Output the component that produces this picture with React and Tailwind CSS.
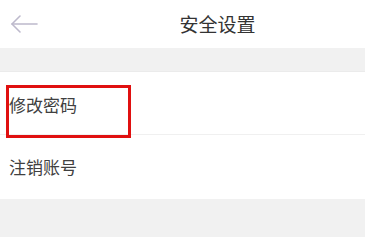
const font = { fontFamily: '"Noto Sans CJK SC", "Noto Sans", sans-serif' };

const App = () => {
  return (
    <div className="w-[365px] h-[237px] bg-[#f1f1f1] flex flex-col" style={font}>
      <div className="h-[48px] bg-white flex items-center">
        <div className="w-[70px] pl-[9px] flex items-center">
          <svg width="30" height="20" viewBox="0 0 30 20" fill="none" stroke="#bdb9cc" strokeWidth="1.6" strokeLinecap="round" strokeLinejoin="round">
            <path d="M28 10H3" />
            <path d="M11 2L3 10l8 8" />
          </svg>
        </div>
        <div className="flex-1 text-center text-[19px] text-[#333333]">安全设置</div>
      </div>
      <div className="h-[23px]" />
      <div className="bg-white border-t border-[#ebebeb]">
        <div className="h-[63px] px-[9px] flex relative border-b border-[#f0f0f0]">
          <span className="mt-[21px] text-[17px] leading-[24px] text-[#404040]">修改密码</span>
          <div className="absolute left-[6px] top-[13px] w-[125px] h-[53px] border-[3px] border-[#e01010]" />
        </div>
        <div className="h-[64px] px-[9px] flex items-center">
          <span className="text-[17px] text-[#404040]">注销账号</span>
        </div>
      </div>
    </div>
  );
};

export default App;
